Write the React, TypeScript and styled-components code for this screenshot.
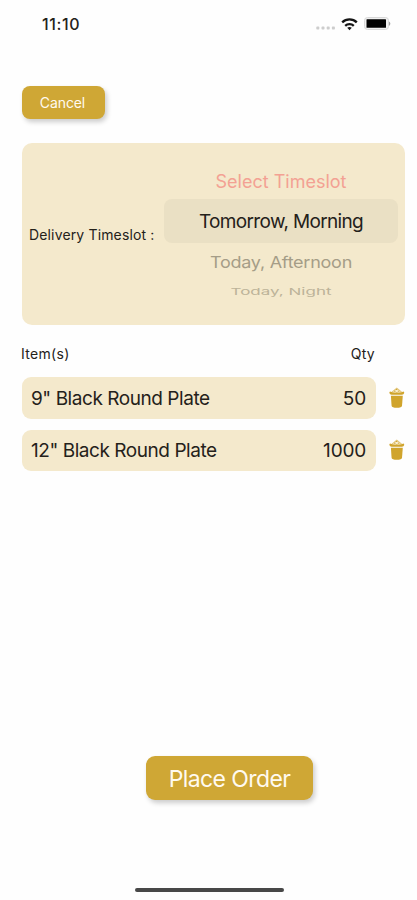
import React from "react";
import styled, { createGlobalStyle } from "styled-components";

const GlobalStyle = createGlobalStyle`
  * { box-sizing: border-box; }
  body { margin: 0; background: #fefefe; }
`;

const Screen = styled.main`
  width: 417px;
  height: 900px;
  display: flex;
  flex-direction: column;
  overflow: hidden;
  background: #fefefe;
  color: #24211a;
  font-family: Inter, "Liberation Sans", sans-serif;
`;

const StatusBar = styled.header`
  height: 48px;
  display: flex;
  align-items: center;
  justify-content: space-between;
  padding: 0 26px 0 42px;
`;

const Clock = styled.time`
  font-size: 16px;
  font-weight: 500;
  letter-spacing: 0.6px;
`;

const StatusIcons = styled.div`
  display: flex;
  align-items: center;
  height: 20px;
`;

const Button = styled.button<{ $large?: boolean }>`
  display: flex;
  align-items: center;
  justify-content: center;
  flex: none;
  border: 0;
  padding: ${(p) => (p.$large ? "2px 0 0" : "0 2px 0 0")};
  width: ${(p) => (p.$large ? 167 : 83)}px;
  height: ${(p) => (p.$large ? 44 : 33)}px;
  border-radius: ${(p) => (p.$large ? 9 : 8)}px;
  background: #cfa735;
  color: #fffaf0;
  font-family: inherit;
  font-size: ${(p) => (p.$large ? 23 : 14)}px;
  letter-spacing: ${(p) => (p.$large ? -0.6 : -0.1)}px;
  box-shadow: 2px 3px 5px rgba(0, 0, 0, 0.2);
`;

const TopActions = styled.nav`
  padding: 38px 0 0 22px;
`;

const TimeslotCard = styled.section`
  display: flex;
  flex: none;
  margin: 24px 12px 0 22px;
  height: 182px;
  border-radius: 10px;
  background: #f4e9cc;
`;

const TimeslotLabel = styled.span`
  width: 142px;
  padding-left: 7px;
  align-self: center;
  font-size: 14px;
  letter-spacing: 0.15px;
  white-space: nowrap;
`;

const Picker = styled.div`
  width: 234px;
  padding-top: 20px;
  display: flex;
  flex-direction: column;
`;

const Option = styled.div<{ $h: number; $size: number; $color: string; $selected?: boolean; $track?: number }>`
  height: ${(p) => p.$h}px;
  display: flex;
  align-items: center;
  justify-content: center;
  border-radius: 8px;
  background: ${(p) => (p.$selected ? "#eae0c4" : "transparent")};
  color: ${(p) => p.$color};
  font-size: ${(p) => p.$size}px;
  letter-spacing: ${(p) => p.$track ?? 0}px;
  white-space: nowrap;
`;

const Tilt = styled.span<{ $y: number }>`
  transform: scaleY(${(p) => p.$y});
`;

const ListHeader = styled.div`
  display: flex;
  justify-content: space-between;
  align-items: center;
  height: 52px;
  padding: 5px 42px 0 21px;
  font-size: 14px;
  letter-spacing: 0.3px;
`;

const List = styled.ul`
  list-style: none;
  margin: 0;
  padding: 0 12px 0 22px;
  display: flex;
  flex-direction: column;
  gap: 11px;
`;

const Row = styled.li`
  display: flex;
  align-items: center;
  gap: 13px;
`;

const ItemBox = styled.div`
  width: 354px;
  height: 41.5px;
  padding: 1px 10px 0 9px;
  display: flex;
  align-items: center;
  justify-content: space-between;
  border-radius: 9px;
  background: #f4e9cc;
  font-size: 19px;
`;

const ItemName = styled.span`
  letter-spacing: -0.45px;
`;

const ItemQty = styled.span`
  letter-spacing: -0.2px;
`;

const Footer = styled.footer`
  flex: 1;
  display: flex;
  flex-direction: column;
  justify-content: space-between;
  padding: 285px 0 8px 146px;
`;

const HomeBar = styled.div`
  width: 149px;
  height: 4px;
  margin-left: -11px;
  border-radius: 2px;
  background: #484848;
`;

const Indicators = () => (
  <StatusIcons>
    <svg width="77" height="20" viewBox="0 0 77 20">
      <g fill="#cdcdcd">
        {[3, 8.2, 13.4, 18.6].map((x) => (
          <rect key={x} x={x - 0.7} y="12.6" width="3" height="3" rx="0.8" />
        ))}
      </g>
      <g fill="none" stroke="#151515" strokeWidth="2.3">
        <path d="M28.2 8.4a10.4 10.4 0 0 1 14.6 0" />
        <path d="M31.2 11.8a6.2 6.2 0 0 1 8.6 0" />
      </g>
      <path d="M33.2 13.8q2.300-1.600 4.600 0L35.500 16.300Z" fill="#151515" />
      <rect x="50.500" y="3.500" width="24" height="12" rx="3" fill="#f0f0f0" stroke="#d8d8d8" />
      <rect x="52.500" y="5.300" width="19.500" height="8.400" rx="0.500" fill="#000" />
      <path d="M75.200 7.600q2.200 2.200 0 4.400Z" fill="#888" />
    </svg>
  </StatusIcons>
);

const TrashIcon = () => (
  <svg width="16" height="22" viewBox="0 0 16 22">
    <path d="M3 5.200 7.800 1.200l4.800 4" fill="#f8eed0" stroke="#e2c67a" strokeWidth="1.100" />
    <path d="M5 4.200h1.600M8.800 4.200h1.600M6.800 2.500h1.600" stroke="#d0a63a" strokeWidth="1" />
    <path d="M1 4.500q3.500 1.500 6.800.8 3.400.7 6.800-.8.800.600.600 1.600-.400 1.600-2.200 1.700H2.600Q.800 7.700.400 6.100.200 5.100 1 4.500Z" fill="#d0a42c" />
    <path d="M1.900 8.800h11.900l-.8 10q-.3 2-5.200 2t-5.200-2Z" fill="#d0a42c" />
  </svg>
);

const items = [
  { name: '9" Black Round Plate', qty: 50 },
  { name: '12" Black Round Plate', qty: 1000 },
];

export default function App() {
  return (
    <>
      <GlobalStyle />
      <Screen>
        <StatusBar>
          <Clock>11:10</Clock>
          <Indicators />
        </StatusBar>
        <TopActions>
          <Button>Cancel</Button>
        </TopActions>
        <TimeslotCard>
          <TimeslotLabel>Delivery Timeslot :</TimeslotLabel>
          <Picker>
            <Option $h={36} $size={18} $color="#f3a193">Select Timeslot</Option>
            <Option $h={44} $size={19} $color="#24211a" $track={-0.65} $selected>Tomorrow, Morning</Option>
            <Option $h={38} $size={18} $color="#a59d87" $track={-0.25}><Tilt $y={0.92}>Today, Afternoon</Tilt></Option>
            <Option $h={22} $size={17} $color="#bcb399"><Tilt $y={0.56}>Today, Night</Tilt></Option>
          </Picker>
        </TimeslotCard>
        <ListHeader>
          <span>Item(s)</span>
          <span>Qty</span>
        </ListHeader>
        <List>
          {items.map((item) => (
            <Row key={item.name}>
              <ItemBox>
                <ItemName>{item.name}</ItemName>
                <ItemQty>{item.qty}</ItemQty>
              </ItemBox>
              <TrashIcon />
            </Row>
          ))}
        </List>
        <Footer>
          <Button $large>Place Order</Button>
          <HomeBar />
        </Footer>
      </Screen>
    </>
  );
}
